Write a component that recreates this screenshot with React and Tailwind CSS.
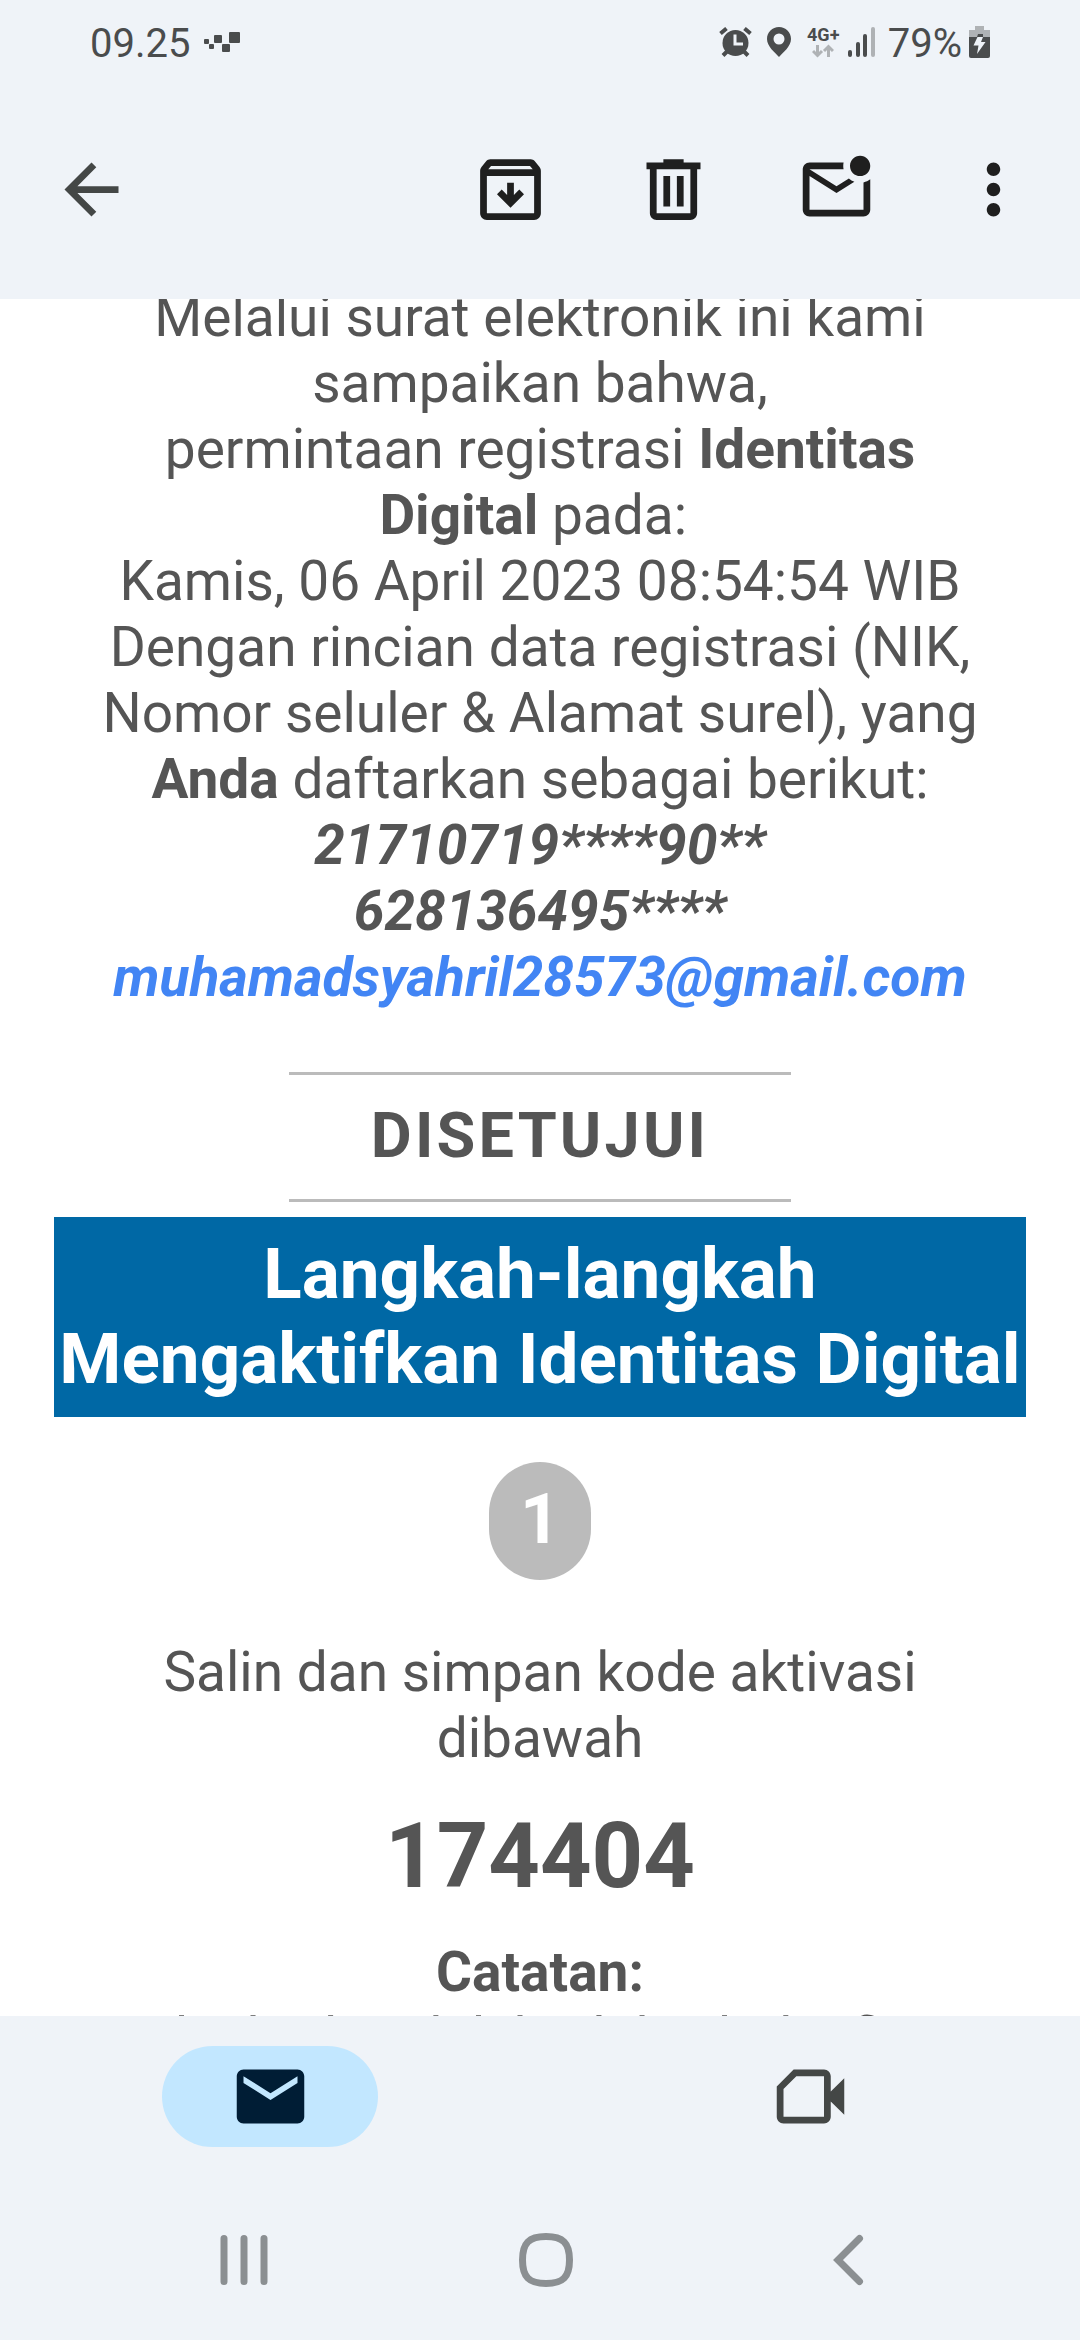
function Icon({ d }) {
  return (
    <svg viewBox="0 0 24 24" className="size-[81px]" fill="currentColor" fillRule="evenodd" aria-hidden="true">
      <path d={d} />
    </svg>
  );
}

const ICONS = {
  back: "M20 11H7.83l5.59-5.59L12 4l-8 8 8 8 1.41-1.41L7.83 13H20v-2z",
  archive:
    "M20.54 5.23l-1.39-1.68C18.88 3.21 18.47 3 18 3H6c-.47 0-.88.21-1.16.55L3.46 5.23C3.17 5.57 3 6.02 3 6.5V19c0 1.1.9 2 2 2h14c1.1 0 2-.9 2-2V6.5c0-.48-.17-.93-.46-1.27zM6.24 5h11.52l.83 1H5.42l.82-1zM5 19V8h14v11H5zM11 10v3.6L9.4 12 8 13.4l4 4 4-4L14.6 12 13 13.6V10z",
  trash:
    "M9 3h6v1h5v2h-1v13c0 1.1-.9 2-2 2H7c-1.1 0-2-.9-2-2V6H4V4h5V3zM7 6v13h10V6H7zM9 8h2v9H9V8zM13 8h2v9h-2V8z",
  unread:
    "M22 8.98V18c0 1.1-.9 2-2 2H4c-1.1 0-2-.9-2-2V6c0-1.1.9-2 2-2h10.1c-.06.32-.1.66-.1 1s.04.68.1 1H4l8 5 3.67-2.29c.47.43 1.02.76 1.63.98L12 13 4 8v10h16V9.9c.74-.15 1.42-.48 2-.92zM16 5c0 1.66 1.34 3 3 3s3-1.34 3-3-1.34-3-3-3-3 1.34-3 3z",
  more: "M12 8c1.1 0 2-.9 2-2s-.9-2-2-2-2 .9-2 2 .9 2 2 2zm0 2c-1.1 0-2 .9-2 2s.9 2 2 2 2-.9 2-2-.9-2-2-2zm0 6c-1.1 0-2 .9-2 2s.9 2 2 2 2-.9 2-2-.9-2-2-2z",
  mail: "M20 4H4c-1.1 0-2 .9-2 2v12c0 1.1.9 2 2 2h16c1.1 0 2-.9 2-2V6c0-1.1-.9-2-2-2zm0 4l-8 5-8-5V6l8 5 8-5v2z",
  meet: "M7 4h9c1.1 0 2 .9 2 2v4.5l4-3.9v10.8l-4-3.9V18c0 1.1-.9 2-2 2H4c-1.1 0-2-.9-2-2V9l5-5zM7.8 6L4 9.8V18h12V6H7.8z",
};

function StatusBar() {
  return (
    <div className="flex h-[83px] items-center justify-between pl-[90px] pr-[90px] text-[40px] leading-[46px] text-[#4a4c4d]">
      <div className="flex items-center gap-[14px]">
        <span className="pt-1">09.25</span>
        <svg viewBox="0 0 36 20" className="h-5 w-9" fill="currentColor" aria-hidden="true">
          <rect x="0" y="7" width="5" height="5" rx="1" />
          <rect x="5" y="12" width="5" height="5" rx="1" />
          <rect x="10" y="3" width="8" height="8" rx="1" />
          <rect x="18" y="12" width="8" height="8" rx="1" />
          <rect x="25" y="0" width="11" height="11" rx="1" />
        </svg>
      </div>
      <div className="flex items-center">
        <svg viewBox="0 0 33 30" className="mr-[15px] h-[30px] w-[33px]" fill="currentColor" stroke="currentColor" aria-hidden="true">
          <circle cx="16.5" cy="16" r="13" stroke="none" />
          <path d="M1.5 6.500 7.500 1.500M31.500 6.500 25.500 1.500M4 28.500l5-5M29 28.500l-5-5" strokeWidth="4" />
          <path d="M16 7.500V17h8" fill="none" stroke="#eff3f8" strokeWidth="3" />
        </svg>
        <svg viewBox="0 0 24 30" className="mr-[17px] h-[30px] w-6" fill="currentColor" fillRule="evenodd" aria-hidden="true">
          <path d="M12 0C5.300 0 0 5.200 0 12c0 7.500 8 13.500 12 18 4-4.500 12-10.500 12-18C24 5.200 18.700 0 12 0zm0 6.500a5.500 5.500 0 1 1 0 11 5.500 5.500 0 0 1 0-11z" />
        </svg>
        <div className="mr-[9px] flex w-[31px] flex-col items-center">
          <span className="text-[18px] font-bold leading-[18px]">4G+</span>
          <svg viewBox="0 0 22 14" className="h-[14px] w-[22px] text-[#afb2b5]" fill="none" stroke="currentColor" strokeWidth="3" aria-hidden="true">
            <path d="M5.500 1v10M1 7l4.500 4.500L10 7M16.500 13V3M12 7l4.500-4.500L21 7" />
          </svg>
        </div>
        <svg viewBox="0 0 27 30" className="mr-[13px] h-[30px] w-[27px]" fill="currentColor" aria-hidden="true">
          <rect x="0" y="23" width="4" height="7" rx="2" />
          <rect x="8" y="15" width="4" height="15" rx="2" />
          <rect x="15" y="7" width="4" height="23" rx="2" />
          <rect x="23" y="0" width="4" height="30" rx="2" className="text-[#afb2b5]" />
        </svg>
        <span className="pt-1">79%</span>
        <svg viewBox="0 0 21 32" className="ml-[7px] h-8 w-[21px]" aria-hidden="true">
          <path d="M6 0h9v4h6v8H0V4h6z" fill="#afb2b5" />
          <path d="M0 11h21v19a2 2 0 0 1-2 2H2a2 2 0 0 1-2-2z" fill="#4a4c4d" />
          <path d="M9 8h5v3H8z" fill="#4a4c4d" />
          <path d="M8.500 11h5.500l-2 5h4.500L8 28l1.500-8.500H4.500z" fill="#eff3f8" />
        </svg>
      </div>
    </div>
  );
}

export default function App() {
  return (
    <div className="flex h-screen flex-col overflow-hidden bg-white font-[Roboto,sans-serif] text-[55px] leading-[66px] text-[#555555]">
      <header className="h-[299px] shrink-0 bg-[#eff3f8]">
        <StatusBar />
        <div className="flex items-center pl-[51px] pr-[46px] pt-[66px] text-[#1f1f1f]">
          <button type="button" aria-label="Kembali" className="mr-auto text-[#444746]">
            <Icon d={ICONS.back} />
          </button>
          <div className="mr-[76px] flex gap-[82px]">
            <button type="button" aria-label="Arsipkan"><Icon d={ICONS.archive} /></button>
            <button type="button" aria-label="Hapus"><Icon d={ICONS.trash} /></button>
            <button type="button" aria-label="Tandai belum dibaca"><Icon d={ICONS.unread} /></button>
          </div>
          <button type="button" aria-label="Opsi lainnya"><Icon d={ICONS.more} /></button>
        </div>
      </header>

      <main className="min-h-0 flex-1 overflow-hidden px-[54px] text-center">
        <p className="-mt-[15px]">
          Melalui surat elektronik ini kami
          <br />
          sampaikan bahwa,
          <br />
          permintaan registrasi <b>Identitas
          <br />
          Digital</b> pada:&nbsp;
          <br />
          Kamis, 06 April 2023 08:54:54 WIB
          <br />
          Dengan rincian data registrasi (NIK,
          <br />
          Nomor seluler &amp; Alamat surel), yang
          <br />
          <b>Anda</b> daftarkan sebagai berikut:
          <br />
          <b className="italic">
            21710719****90**
            <br />
            628136495****
            <br />
            <a href="mailto:muhamadsyahril28573@gmail.com" className="text-[#4285f4]">
              muhamadsyahril28573@gmail.com
            </a>
          </b>
        </p>
        <div className="mx-auto mt-[62px] w-[502px] border-y-[3px] border-[#bbbbbb] pb-[26px] pt-6 text-[63px] font-bold leading-[74px] tracking-wider">
          DISETUJUI
        </div>
        <h1 className="mt-[15px] bg-[#0068a5] pb-4 pt-[14px] text-[71px] font-bold leading-[85px] text-white">
          Langkah-langkah
          <br />
          Mengaktifkan Identitas Digital
        </h1>
        <div className="mx-auto mt-[45px] h-[118px] w-[102px] rounded-full bg-[#bbbbbb] text-[70px] font-bold leading-[114px] text-white">
          1
        </div>
        <p className="mt-[59px]">
          Salin dan simpan kode aktivasi
          <br />
          dibawah
        </p>
        <p className="mt-8 text-[90px] font-bold leading-[107px]">174404</p>
        <p className="mt-[29px]">
          <b>Catatan:</b>
          <br />
          Jika kode tidak berlaku, buka fitur
        </p>
      </main>

      <footer className="h-[324px] shrink-0 bg-[#eff3f8] pt-[30px]">
        <nav className="grid grid-cols-2 justify-items-center">
          <button type="button" aria-label="Email" className="flex h-[101px] w-[216px] items-center justify-center rounded-full bg-[#c2e7ff] text-[#001d35]">
            <Icon d={ICONS.mail} />
          </button>
          <button type="button" aria-label="Meet" className="flex h-[101px] w-[216px] items-center justify-center rounded-full text-[#444746]">
            <Icon d={ICONS.meet} />
          </button>
        </nav>
        <div className="grid grid-cols-3 justify-items-center pl-[93px] pr-[81px] pt-[83px] text-[#8b8f92]">
          <button type="button" aria-label="Aplikasi terbaru">
            <svg viewBox="0 0 60 60" className="size-[60px]" stroke="currentColor" strokeWidth="7" strokeLinecap="round">
              <path d="M10 8.500v43M30 8.500v43M50 8.500v43" />
            </svg>
          </button>
          <button type="button" aria-label="Beranda">
            <svg viewBox="0 0 60 60" className="size-[60px]" fill="none" stroke="currentColor" strokeWidth="7">
              <path d="M30 6.500C47 6.500 53.500 13 53.500 30S47 53.500 30 53.500 6.500 47 6.500 30 13 6.500 30 6.500z" />
            </svg>
          </button>
          <button type="button" aria-label="Kembali ke layar sebelumnya">
            <svg viewBox="0 0 60 60" className="size-[60px]" fill="none" stroke="currentColor" strokeWidth="7" strokeLinecap="round">
              <path d="M41.500 8.500 20 30l21.500 21.500" />
            </svg>
          </button>
        </div>
      </footer>
    </div>
  );
}
